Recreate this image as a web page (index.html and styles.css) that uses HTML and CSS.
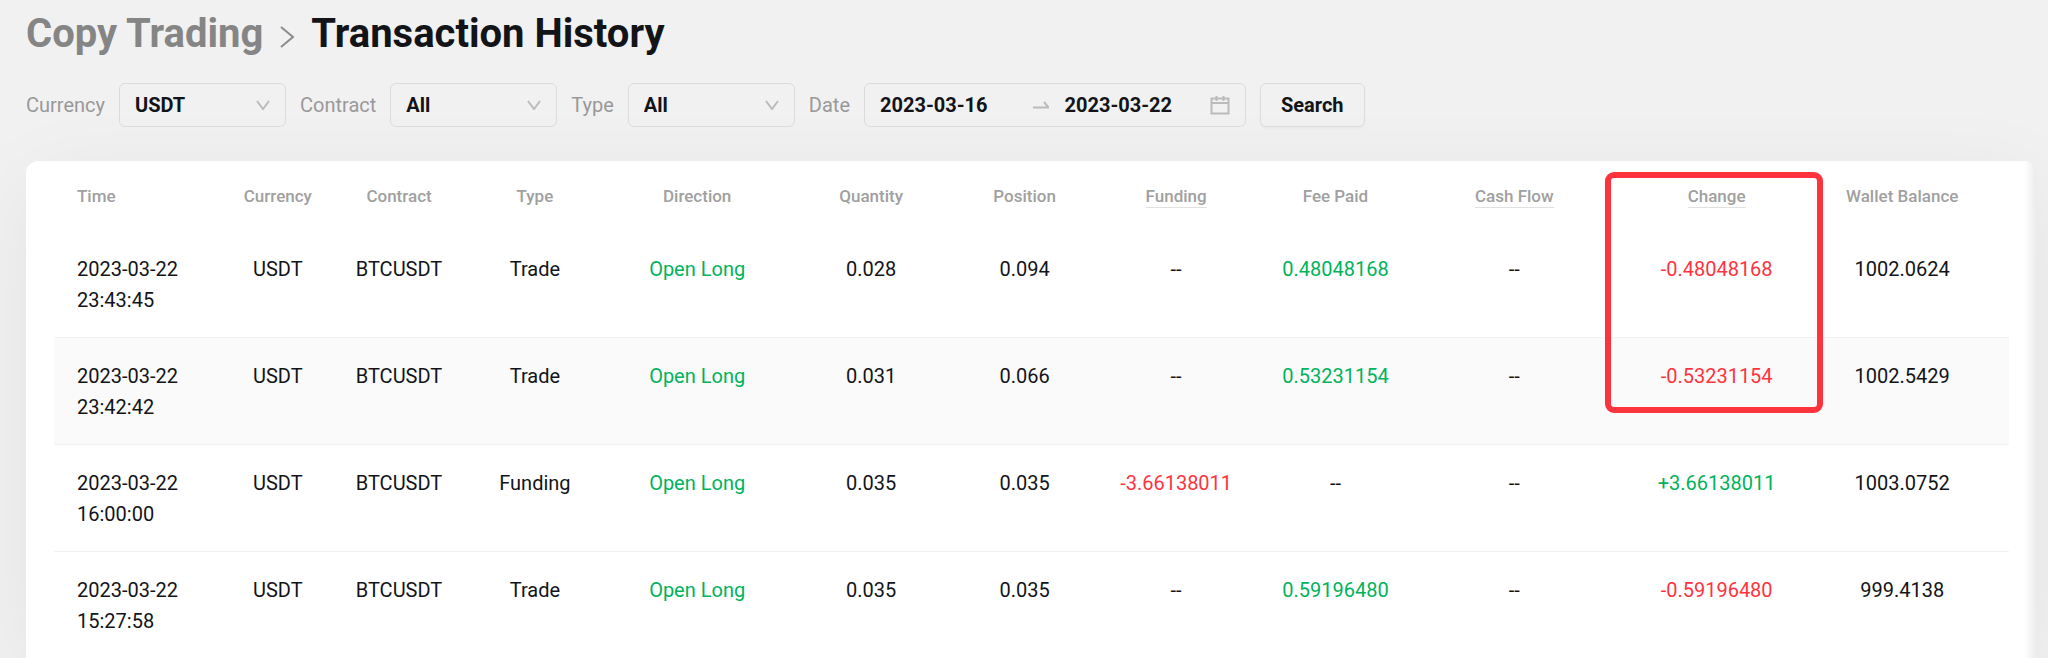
FILE: index.html
```
<!doctype html>
<html lang="en">
	<head>
		<meta charset="utf-8">
		<meta name="viewport" content="width=device-width, initial-scale=1.0">
		<title>Transaction History</title>
		<link rel="stylesheet" href="styles.css">
	</head>
	<body>
		<h1 class="title">
			<a href="#" class="title__parent">Copy Trading</a>
			<svg class="title__sep" viewBox="0 0 14 22" width="14" height="22"><path d="M1 1L13 11L1 21"/></svg>
			<span>Transaction History</span>
		</h1>

		<!-- Filters -->
		<form class="filters">
			<label for="currency">Currency</label>
			<div class="select">
				<select id="currency"><option>USDT</option></select>
				<svg viewBox="0 0 14 10" width="14" height="10"><path d="M1 1L7 9L13 1"/></svg>
			</div>
			<label for="contract">Contract</label>
			<div class="select">
				<select id="contract"><option>All</option></select>
				<svg viewBox="0 0 14 10" width="14" height="10"><path d="M1 1L7 9L13 1"/></svg>
			</div>
			<label for="type">Type</label>
			<div class="select">
				<select id="type"><option>All</option></select>
				<svg viewBox="0 0 14 10" width="14" height="10"><path d="M1 1L7 9L13 1"/></svg>
			</div>
			<label for="dateFrom">Date</label>
			<div class="range">
				<input type="text" id="dateFrom" value="2023-03-16">
				<svg viewBox="0 0 16 8" width="16" height="8"><path d="M0 6.5H15.5L11 1"/></svg>
				<input type="text" id="dateTo" value="2023-03-22" aria-label="End date">
				<svg viewBox="0 0 20 20" width="20" height="20"><path d="M1.500 3.500H18.500V18.500H1.500ZM1.500 8H18.500M6.500 1V6M13.500 1V6"/></svg>
			</div>
			<button type="button" class="search">Search</button>
		</form>

		<!-- History table -->
		<div class="card">
			<table class="history">
				<colgroup>
					<col class="c-time"><col class="c-currency"><col class="c-contract"><col class="c-type">
					<col class="c-direction"><col class="c-quantity"><col class="c-position"><col class="c-funding">
					<col class="c-fee"><col class="c-cash"><col class="c-change"><col class="c-wallet">
				</colgroup>
				<thead>
					<tr>
						<th>Time</th>
						<th>Currency</th>
						<th>Contract</th>
						<th>Type</th>
						<th>Direction</th>
						<th>Quantity</th>
						<th>Position</th>
						<th><span class="hint">Funding</span></th>
						<th>Fee Paid</th>
						<th><span class="hint">Cash Flow</span></th>
						<th class="marked"><span class="hint">Change</span></th>
						<th>Wallet Balance</th>
					</tr>
				</thead>
				<tbody>
					<tr>
						<td>2023-03-22<br>23:43:45</td>
						<td>USDT</td>
						<td>BTCUSDT</td>
						<td>Trade</td>
						<td class="up">Open Long</td>
						<td>0.028</td>
						<td>0.094</td>
						<td>--</td>
						<td class="up">0.48048168</td>
						<td>--</td>
						<td class="down">-0.48048168</td>
						<td>1002.0624</td>
					</tr>
					<tr class="active">
						<td>2023-03-22<br>23:42:42</td>
						<td>USDT</td>
						<td>BTCUSDT</td>
						<td>Trade</td>
						<td class="up">Open Long</td>
						<td>0.031</td>
						<td>0.066</td>
						<td>--</td>
						<td class="up">0.53231154</td>
						<td>--</td>
						<td class="down">-0.53231154</td>
						<td>1002.5429</td>
					</tr>
					<tr>
						<td>2023-03-22<br>16:00:00</td>
						<td>USDT</td>
						<td>BTCUSDT</td>
						<td>Funding</td>
						<td class="up">Open Long</td>
						<td>0.035</td>
						<td>0.035</td>
						<td class="down">-3.66138011</td>
						<td>--</td>
						<td>--</td>
						<td class="up">+3.66138011</td>
						<td>1003.0752</td>
					</tr>
					<tr>
						<td>2023-03-22<br>15:27:58</td>
						<td>USDT</td>
						<td>BTCUSDT</td>
						<td>Trade</td>
						<td class="up">Open Long</td>
						<td>0.035</td>
						<td>0.035</td>
						<td>--</td>
						<td class="up">0.59196480</td>
						<td>--</td>
						<td class="down">-0.59196480</td>
						<td>999.4138</td>
					</tr>
				</tbody>
			</table>
		</div>
	</body>
</html>
```
FILE: styles.css
```
*,
*::after {
	box-sizing: border-box;
}
body {
	display: flex;
	flex-direction: column;
	min-height: 100vh;
	margin: 0;
	padding: 9px 12px 0 26px;
	font-family: Roboto, "Liberation Sans", sans-serif;
	font-size: 20px;
	color: #121418;
	background-color: #f1f1f1;
}

/* Breadcrumb title */
.title {
	display: flex;
	align-items: center;
	gap: 17px;
	margin: 0;
	font-size: 40px;
	line-height: 50px;
	font-weight: bold;
}
.title__parent {
	color: #858585;
	text-decoration: none;
}
.title__sep {
	margin-top: 6px;
}
svg {
	flex: none;
	fill: none;
	stroke: #bbb;
	stroke-width: 2;
}
.title__sep {
	stroke: #8c8c8c;
}

/* Filters */
.filters {
	position: relative;
	z-index: 1;
	display: flex;
	align-items: center;
	gap: 14px;
	margin: 24px 0 34px;
	color: #999;
}
.select {
	display: grid;
	align-items: center;
	width: 167px;
}
.select select,
.select svg {
	grid-area: 1 / 1;
}
.select svg {
	justify-self: end;
	margin-right: 16px;
	pointer-events: none;
}
select,
.range,
.search {
	height: 44px;
	border: 1px solid #dcdcdc;
	border-radius: 6px;
	background: transparent;
}
select,
input,
.search {
	font-family: inherit;
	font-size: 20px;
	font-weight: bold;
	color: #121418;
}
select {
	appearance: none;
	width: 100%;
	padding: 0 15px;
}
.range {
	display: flex;
	align-items: center;
	width: 382px;
	padding: 0 15px;
}
input {
	flex: 1;
	min-width: 0;
	margin-right: 16px;
	padding: 0;
	border: none;
	background: transparent;
}
input:first-child {
	margin-right: 24px;
}
.range svg {
	margin-right: 15px;
}
.range svg:last-child {
	margin-right: 0;
}
.search {
	padding: 0 20px;
	box-shadow: 0 2px 2px rgba(0,0,0,0.03);
	cursor: pointer;
}

/* Table card */
.card {
	flex: 1;
	padding: 0 27px 0 28px;
	border-radius: 12px 12px 0 0;
	background: linear-gradient(to left, #ececec, #fff 12px);
	box-shadow: 0 20px 90px rgba(0,0,0,0.06);
}
.history {
	width: 100%;
	table-layout: fixed;
	border-collapse: collapse;
	line-height: 31px;
}
.c-time { width: 8.300%; }
.c-currency { width: 6.300%; }
.c-contract { width: 6.100%; }
.c-type { width: 7.800%; }
.c-direction { width: 8.800%; }
.c-quantity { width: 9%; }
.c-position { width: 6.700%; }
.c-funding { width: 8.800%; }
.c-fee { width: 7.500%; }
.c-cash { width: 10.800%; }
.c-change { width: 9.900%; }
.c-wallet { width: 10%; }

th {
	height: 70px;
	padding: 0;
	font-size: 17px;
	line-height: 22px;
	font-weight: 500;
	color: #a0a0a0;
}
td {
	padding: 23px 0 21px;
	text-align: center;
	vertical-align: top;
	border-bottom: 1px solid #f2f2f2;
}
tr:last-child td {
	padding-bottom: 20px;
	border-bottom: none;
}
th:first-child,
td:first-child {
	padding-left: 23px;
	text-align: left;
}
th:last-child,
td:last-child {
	padding-right: 18px;
}
.hint {
	display: inline-block;
	margin-bottom: -1px;
	border-bottom: 1px solid #e0e0e0;
}
.active {
	background-color: #fafafa;
}
.up {
	color: #00b35c;
}
.down {
	color: #ff333d;
}

/* Frame over the Change column */
.marked {
	position: relative;
}
.marked::after {
	content: "";
	position: absolute;
	top: 11px;
	left: -15px;
	right: -10px;
	height: 241px;
	border: 6px solid #ff333d;
	border-radius: 9px;
	pointer-events: none;
}
```
